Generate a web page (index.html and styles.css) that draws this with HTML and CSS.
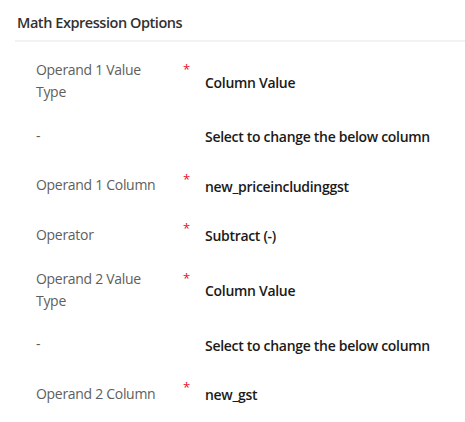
FILE: index.html
```html
<!DOCTYPE html>
<html>
<head>
<meta charset="utf-8">
<link rel="stylesheet" href="styles.css">
</head>
<body>
<div class="panel">
  <div class="header">Math Expression Options</div>
  <div class="rows">
    <div class="row">
      <div class="label">Operand 1 Value Type</div>
      <div class="req">*</div>
      <div class="value">Column Value</div>
    </div>
    <div class="row">
      <div class="label">-</div>
      <div class="req"></div>
      <div class="value">Select to change the below column</div>
    </div>
    <div class="row">
      <div class="label">Operand 1 Column</div>
      <div class="req">*</div>
      <div class="value">new_priceincludinggst</div>
    </div>
    <div class="row">
      <div class="label">Operator</div>
      <div class="req">*</div>
      <div class="value">Subtract (-)</div>
    </div>
    <div class="row">
      <div class="label">Operand 2 Value Type</div>
      <div class="req">*</div>
      <div class="value">Column Value</div>
    </div>
    <div class="row">
      <div class="label">-</div>
      <div class="req"></div>
      <div class="value">Select to change the below column</div>
    </div>
    <div class="row">
      <div class="label">Operand 2 Column</div>
      <div class="req">*</div>
      <div class="value">new_gst</div>
    </div>
  </div>
</div>
</body>
</html>
```

FILE: styles.css
```css
html, body {
  margin: 0;
  padding: 0;
  background: #ffffff;
}
body {
  font-family: "Open Sans", "Noto Sans", sans-serif;
  width: 465px;
  height: 422px;
  overflow: hidden;
}
.panel {
  padding: 0 0 0 15px;
}
.header {
  height: 42px;
  box-sizing: border-box;
  padding: 13px 0 0 2px;
  font-size: 14.5px;
  letter-spacing: -0.45px;
  font-weight: 600;
  color: #323130;
  border-bottom: 2px solid #f3f2f1;
  line-height: 20px;
}
.rows {
  padding: 9px 0 0 21px;
}
.row {
  display: flex;
  align-items: stretch;
  padding: 8px 0 8px;
  min-height: 33.5px;
}
.label {
  width: 136px;
  padding-right: 11px;
  font-size: 14px;
  letter-spacing: -0.3px;
  line-height: 22px;
  color: #605e5c;
  align-self: center;
}
.req {
  width: 22px;
  color: #e81123;
  font-size: 13px;
  line-height: 16px;
  padding-top: 2px;
}
.value {
  align-self: center;
  font-size: 14px;
  font-weight: 600;
  letter-spacing: -0.3px;
  color: #1b1a19;
  line-height: 22px;
  padding-top: 3px;
}
```
